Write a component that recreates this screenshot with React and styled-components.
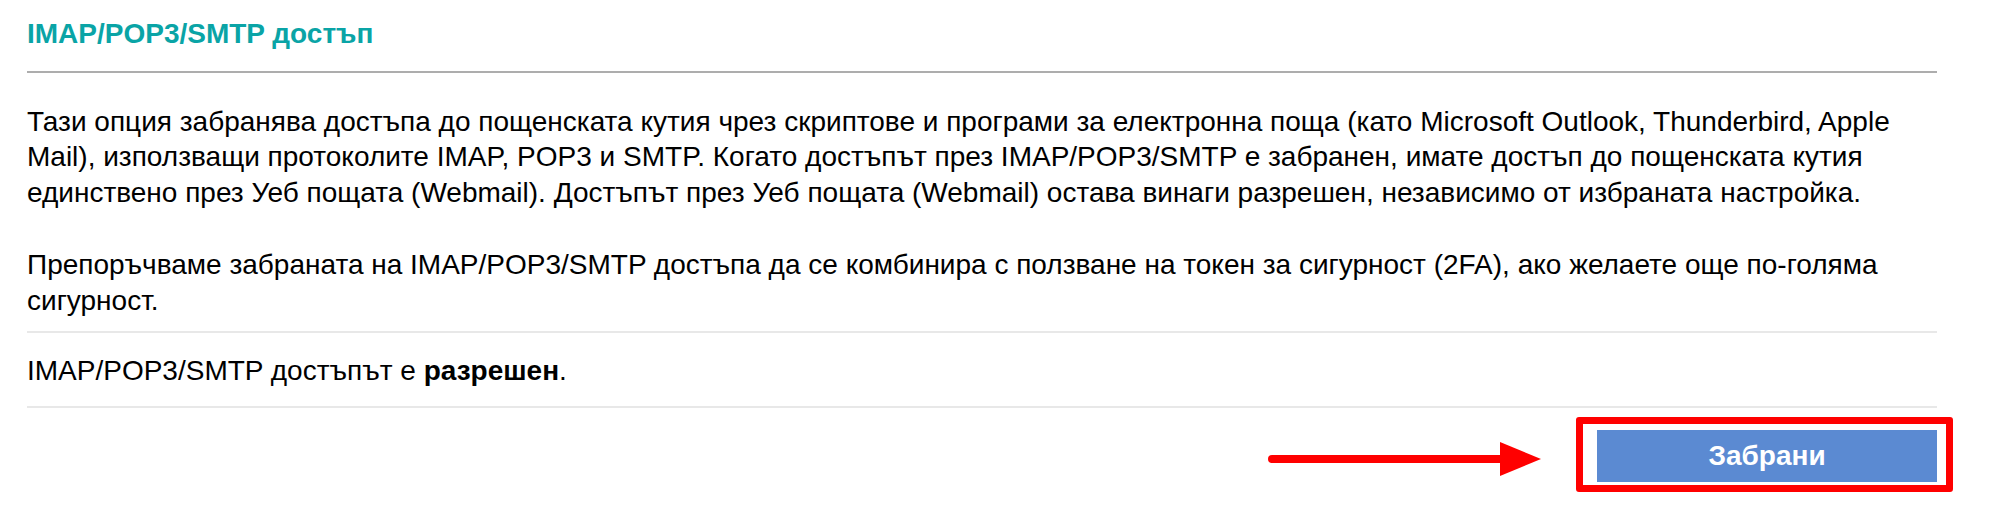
import React from "react";
import styled, { createGlobalStyle } from "styled-components";

const Global = createGlobalStyle`
  html, body { margin: 0; padding: 0; background: #fff; }
  body { font-family: "Liberation Sans", Arial, sans-serif; color: #000; }
`;

const Page = styled.div`
  width: 1937px;
  min-height: 520px;
  box-sizing: border-box;
  padding: 18px 0 37px 27px;
`;

const Title = styled.h2`
  margin: 0;
  font-size: 28px;
  line-height: 32px;
  font-weight: 700;
  color: #0aa4a6;
`;

const Rule = styled.div`
  height: ${(p) => p.$h || 2}px;
  background: ${(p) => p.$color || "#adadad"};
  margin-top: ${(p) => p.$mt || 0}px;
`;

const Body = styled.div`
  padding-top: 30.5px;
  padding-bottom: 13px;
`;

const Para = styled.p`
  margin: 0 0 ${(p) => p.$mb || 0}px 0;
  font-size: 28px;
  line-height: 35.6px;
`;

const Status = styled.div`
  padding: 19.5px 0 17px;
  font-size: 28px;
  line-height: 35.6px;
`;

const Footer = styled.div`
  display: flex;
  justify-content: flex-end;
  align-items: center;
  padding-top: 22px;
  gap: 55px;
`;

const Arrow = styled.svg`
  display: block;
  margin-top: 6px;
`;

const Highlight = styled.div`
  position: relative;
  &::before {
    content: "";
    position: absolute;
    top: -13px;
    right: -16px;
    bottom: -10px;
    left: -21px;
    border: 7px solid #ff0000;
    border-radius: 3px;
    pointer-events: none;
  }
`;

const Button = styled.button`
  display: block;
  width: 340px;
  height: 52px;
  border: none;
  background: #5b8ad2;
  color: #fff;
  font-family: "Liberation Sans", Arial, sans-serif;
  font-weight: 700;
  font-size: 28px;
  padding: 0;
  cursor: pointer;
`;

export default function App() {
  return (
    <>
      <Global />
      <Page>
        <Title>IMAP/POP3/SMTP достъп</Title>
        <Rule $mt={21} />
        <Body>
          <Para $mb={37}>
            Тази опция забранява достъпа до пощенската кутия чрез скриптове и програми за електронна поща (като Microsoft Outlook, Thunderbird, Apple Mail), използващи протоколите IMAP, POP3 и SMTP. Когато достъпът през IMAP/POP3/SMTP е забранен, имате достъп до пощенската кутия единствено през Уеб пощата (Webmail). Достъпът през Уеб пощата (Webmail) остава винаги разрешен, независимо от избраната настройка.
          </Para>
          <Para>
            Препоръчваме забраната на IMAP/POP3/SMTP достъпа да се комбинира с ползване на токен за сигурност (2FA), ако желаете още по-голяма сигурност.
          </Para>
        </Body>
        <Rule $color="#e8e8e8" />
        <Status>
          IMAP/POP3/SMTP достъпът е <b>разрешен</b>.
        </Status>
        <Rule $color="#e8e8e8" />
        <Footer>
          <Arrow width="274" height="34" viewBox="0 0 274 34">
            <line x1="4" y1="17" x2="236" y2="17" stroke="#ff0000" strokeWidth="8" strokeLinecap="round" />
            <polygon points="232,0 273,17 232,34" fill="#ff0000" />
          </Arrow>
          <Highlight>
            <Button>Забрани</Button>
          </Highlight>
        </Footer>
      </Page>
    </>
  );
}
